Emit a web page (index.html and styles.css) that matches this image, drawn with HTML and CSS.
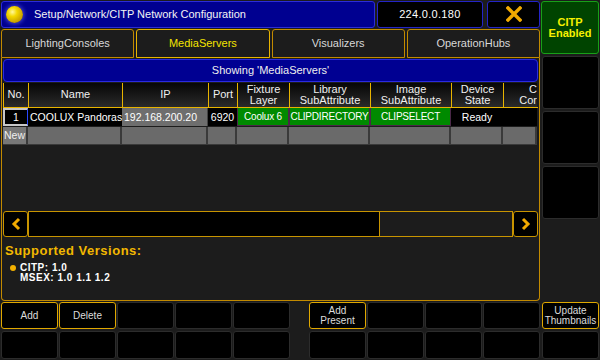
FILE: index.html
```html
<!DOCTYPE html>
<html lang="en">
<head>
	<meta charset="UTF-8">
	<title>CITP Network Configuration</title>
	<link rel="stylesheet" href="styles.css">
</head>
<body>
<div class="screen">
	<div class="main">
		<div class="titlebar">
			<div class="title"><i class="orb"></i><span>Setup/Network/CITP Network Configuration</span></div>
			<div class="ip">224.0.0.180</div>
			<div class="close">
				<svg width="16" height="16" viewBox="0 0 16 16"><path d="M2 2 L14 14 M14 2 L2 14" stroke="#f2aa00" stroke-width="3.4" stroke-linecap="square"/></svg>
			</div>
		</div>
		<div class="tabs">
			<div class="tab">LightingConsoles</div>
			<div class="tab active">MediaServers</div>
			<div class="tab">Visualizers</div>
			<div class="tab">OperationHubs</div>
		</div>
		<div class="panel">
			<div class="showing">Showing 'MediaServers'</div>
			<div class="table">
				<div class="row head">
					<div class="cell">No.</div>
					<div class="cell">Name</div>
					<div class="cell">IP</div>
					<div class="cell">Port</div>
					<div class="cell">Fixture<br>Layer</div>
					<div class="cell">Library<br>SubAttribute</div>
					<div class="cell">Image<br>SubAttribute</div>
					<div class="cell">Device<br>State</div>
					<div class="cell cut">C<br>Cor</div>
				</div>
				<div class="row data">
					<div class="cell sel">1</div>
					<div class="cell black name">COOLUX Pandoras</div>
					<div class="cell grey">192.168.200.20</div>
					<div class="cell black">6920</div>
					<div class="cell green">Coolux 6</div>
					<div class="cell green">CLIPDIRECTORY</div>
					<div class="cell green">CLIPSELECT</div>
					<div class="cell black">Ready</div>
					<div class="cell black"></div>
				</div>
				<div class="row empty">
					<div class="cell new">New</div>
					<div class="cell"></div>
					<div class="cell"></div>
					<div class="cell"></div>
					<div class="cell"></div>
					<div class="cell"></div>
					<div class="cell"></div>
					<div class="cell"></div>
					<div class="cell"></div>
				</div>
			</div>
			<div class="scroll">
				<div class="arrow">
					<svg width="12" height="14" viewBox="0 0 12 14"><path d="M9 2 L4 7 L9 12" fill="none" stroke="#f2aa00" stroke-width="3"/></svg>
				</div>
				<div class="track"></div>
				<div class="rest"></div>
				<div class="arrow">
					<svg width="12" height="14" viewBox="0 0 12 14"><path d="M3 2 L8 7 L3 12" fill="none" stroke="#f2aa00" stroke-width="3"/></svg>
				</div>
			</div>
			<div class="versions">
				<p class="heading">Supported Versions:</p>
				<p class="line"><i class="dot"></i>CITP: 1.0</p>
				<p class="line">MSEX: 1.0 1.1 1.2</p>
			</div>
		</div>
		<div class="keys">
			<div class="group">
				<div class="key on">Add</div>
				<div class="key on">Delete</div>
				<div class="key"></div>
				<div class="key"></div>
				<div class="key"></div>
				<div class="key"></div>
				<div class="key"></div>
				<div class="key"></div>
				<div class="key"></div>
				<div class="key"></div>
			</div>
			<div class="group right">
				<div class="key on">Add<br>Present</div>
				<div class="key"></div>
				<div class="key"></div>
				<div class="key"></div>
				<div class="key"></div>
				<div class="key"></div>
				<div class="key"></div>
				<div class="key"></div>
			</div>
		</div>
	</div>
	<div class="side">
		<div class="citp">CITP<br>Enabled</div>
		<div class="sbtn"></div>
		<div class="sbtn"></div>
		<div class="sbtn"></div>
		<div class="spacer"></div>
		<div class="sbtn small on">Update<br>Thumbnails</div>
		<div class="sbtn small last"></div>
	</div>
</div>
</body>
</html>
```
FILE: styles.css
```css
* {
	box-sizing: border-box;
}

body {
	margin: 0;
	background: #1c1c1c;
	font-family: "Liberation Sans", Arial, sans-serif;
	font-size: 11px;
	color: #fff;
}

.screen {
	width: 600px;
	height: 360px;
	display: flex;
	gap: 1px;
	padding: 1px 1px 0 1px;
	overflow: hidden;
}

.main {
	width: 539px;
	display: flex;
	flex-direction: column;
}

/* title bar */
.titlebar {
	height: 27px;
	display: flex;
	gap: 2px;
}

.title {
	width: 375px;
	background: #000090;
	border: 1px solid #2c2cd8;
	border-radius: 3px;
	display: flex;
	align-items: center;
	padding-left: 4px;
}

.orb {
	width: 17px;
	height: 17px;
	border-radius: 50%;
	background: radial-gradient(circle at 38% 35%, #fff8a0 0, #f4d800 30%, #c8a000 70%, #806000 100%);
	box-shadow: 0 0 4px 1px rgba(120, 120, 255, 0.6);
	margin-right: 11px;
}

.title span {
	font-size: 11px;
	color: #f4f4f4;
}

.ip {
	width: 107px;
	background: #000;
	border: 1px solid #2424c8;
	border-radius: 3px;
	display: flex;
	align-items: center;
	justify-content: center;
	font-size: 11px;
	letter-spacing: 0.3px;
}

.close {
	width: 53px;
	margin-left: 2px;
	background: #000;
	border: 1px solid #2424c8;
	border-radius: 3px;
	display: flex;
	align-items: center;
	justify-content: center;
}

/* tabs */
.tabs {
	display: flex;
	gap: 2px;
	margin-top: 1px;
	height: 29px;
}

.tab {
	flex: 1;
	border: 1px solid #c28a00;
	border-radius: 3px 3px 0 0;
	display: flex;
	align-items: center;
	justify-content: center;
	color: #d8d8d8;
	background: #1c1c1c;
}

.tab.active {
	border-color: #e8b400;
	color: #f4e400;
}

/* panel */
.panel {
	height: 244px;
	border: 1px solid #c28a00;
	border-top: none;
	border-radius: 0 0 4px 4px;
	padding: 1px 1px 0 1px;
	display: flex;
	flex-direction: column;
}

.showing {
	height: 23px;
	background: #000092;
	border: 1px solid #2a2ae0;
	border-radius: 4px;
	display: flex;
	align-items: center;
	justify-content: center;
	color: #eee;
}

.table {
	margin-top: 1px;
	height: 128px;
}

.row {
	display: grid;
	grid-template-columns: 25px 94px 86px 29px 52px 81px 81px 52px 34px;
}

.row.head {
	height: 25px;
	border-bottom: 1px solid #e8b400;
}

.head .cell {
	background: linear-gradient(#060606, #2a2a2a);
	border-left: 1px solid #e8b400;
	display: flex;
	align-items: center;
	justify-content: center;
	text-align: center;
	line-height: 11px;
	color: #f0f0f0;
	overflow: hidden;
}

.head .cell.cut {
	justify-content: flex-end;
	text-align: right;
}

.row.data {
	height: 18px;
}

.data .cell {
	display: flex;
	align-items: center;
	justify-content: center;
	white-space: nowrap;
	overflow: hidden;
	font-size: 10.5px;
}

.data .sel {
	background: #000;
	border: 2px solid #c8c8c8;
	border-right: 1px solid #2a48ff;
}

.data .black {
	background: #000;
}

.data .name {
	justify-content: flex-start;
	padding-left: 2px;
}

.data .grey {
	background: #6e6e6e;
	border-right: 1px solid #444;
	justify-content: flex-start;
	padding-left: 2px;
}

.data .green {
	background: #008a00;
	border: 1px solid #4a2848;
	border-top: none;
	font-size: 10px;
	letter-spacing: -0.2px;
}

.row.empty {
	height: 19px;
	padding-top: 1px;
}

.empty .cell {
	background: #6a6a6a;
	border-right: 2px solid #3a3a3a;
	border-bottom: 1px solid #3a3a3a;
}

.empty .cell.new {
	background: #777;
	color: #f0f0f0;
	display: flex;
	align-items: center;
	justify-content: center;
	font-size: 10.5px;
}

/* scroll bar */
.scroll {
	height: 26px;
	display: flex;
}

.scroll > div {
	border: 1px solid #c89400;
}

.arrow {
	width: 25px;
	background: #000;
	border-radius: 3px;
	display: flex;
	align-items: center;
	justify-content: center;
}

.track {
	width: 352px;
	background: #000;
}

.rest {
	width: 133px;
	background: #1c1c1c;
	border-left: none !important;
}

/* versions */
.versions {
	padding: 6px 0 0 2px;
}

.versions p {
	margin: 0;
}

.heading {
	color: #f2b800;
	font-size: 13px;
	font-weight: bold;
	letter-spacing: 0.5px;
	margin-bottom: 5px !important;
}

.line {
	font-weight: bold;
	font-size: 10px;
	line-height: 10px;
	letter-spacing: 0.5px;
	padding-left: 15px;
	position: relative;
}

.dot {
	position: absolute;
	left: 5px;
	top: 2px;
	width: 6px;
	height: 6px;
	border-radius: 50%;
	background: #f2b000;
}

/* bottom keys */
.keys {
	margin-top: 1px;
	display: flex;
	justify-content: space-between;
	height: 58px;
}

.group {
	display: grid;
	grid-template-columns: repeat(5, 57px);
	grid-template-rows: 27px 28px;
	gap: 2px 1px;
}

.group.right {
	grid-template-columns: repeat(4, 57px);
	gap: 2px 1px;
}

.key {
	background: #000;
	border: 1px solid #2c2c2c;
	border-radius: 3px;
	display: flex;
	align-items: center;
	justify-content: center;
	text-align: center;
	font-size: 10px;
	line-height: 10px;
	color: #dcdcdc;
}

.key.on {
	border-color: #e0a800;
}

/* side column */
.side {
	width: 58px;
	display: flex;
	flex-direction: column;
	gap: 2px;
}

.citp {
	height: 53px;
	background: #004400;
	border: 1px solid #18a018;
	border-radius: 3px;
	display: flex;
	align-items: center;
	justify-content: center;
	text-align: center;
	font-weight: bold;
	font-size: 11px;
	line-height: 11px;
	color: #f6f000;
}

.sbtn {
	height: 53px;
	margin-left: 1px;
	background: #000;
	border: 1px solid #2c2c2c;
	border-radius: 3px;
}

.spacer {
	flex: 1;
}

.sbtn.small {
	height: 27px;
	display: flex;
	align-items: center;
	justify-content: center;
	text-align: center;
	font-size: 10px;
	line-height: 10px;
	color: #dcdcdc;
}

.sbtn.on {
	border-color: #e0a800;
}

.sbtn.last {
	height: 28px;
	margin-bottom: 1px;
}
```
